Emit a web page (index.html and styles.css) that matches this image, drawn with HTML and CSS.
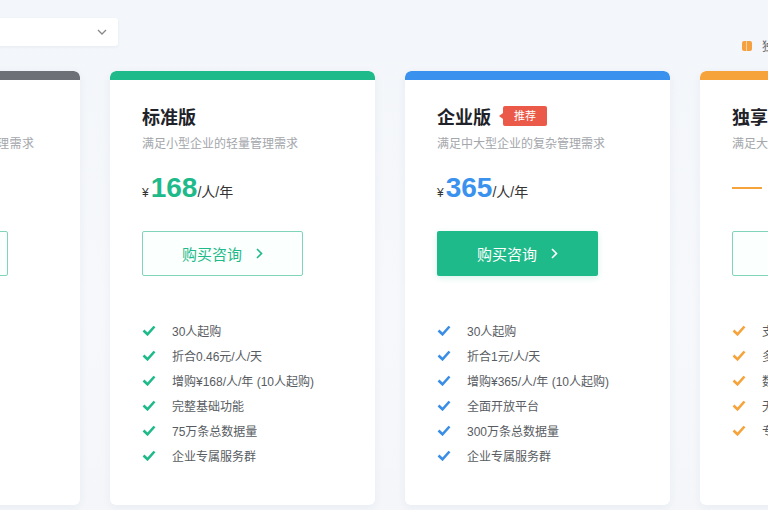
FILE: index.html
```html
<!DOCTYPE html>
<html lang="zh-CN">
<head>
    <meta charset="UTF-8">
    <meta name="viewport" content="width=device-width, initial-scale=1.0">
    <title>价格方案</title>
    <link rel="stylesheet" href="styles.css">
</head>
<body>
    <div id="page">
        <div class="toolbar">
            <div class="select">
                <svg class="select-arrow" width="10" height="6" viewBox="0 0 10 6"><path d="M1 1l4 4 4-4" fill="none" stroke="#888" stroke-width="1.3"/></svg>
            </div>
            <div class="legend"><i class="legend-dot"></i><span>独享</span></div>
        </div>

        <div class="plans">
            <!-- 基础版 -->
            <div class="plan plan-gray">
                <div class="plan-bar"></div>
                <div class="plan-body">
                    <h3 class="plan-title">基础版</h3>
                    <p class="plan-desc">满足个人及小团队的基础管理需求</p>
                    <div class="plan-price"><span class="num">免费</span></div>
                    <a class="btn btn-line">立即使用<svg class="chev" width="7" height="11" viewBox="0 0 7 11"><path d="M1 1l4.5 4.5L1 10" fill="none" stroke="currentColor" stroke-width="1.6"/></svg></a>
                </div>
            </div>

            <!-- 标准版 -->
            <div class="plan plan-green">
                <div class="plan-bar"></div>
                <div class="plan-body">
                    <h3 class="plan-title">标准版</h3>
                    <p class="plan-desc">满足小型企业的轻量管理需求</p>
                    <div class="plan-price"><span class="cur">¥</span><span class="num">168</span><span class="unit">/人/年</span></div>
                    <a class="btn btn-line">购买咨询<svg class="chev" width="7" height="11" viewBox="0 0 7 11"><path d="M1 1l4.5 4.5L1 10" fill="none" stroke="currentColor" stroke-width="1.6"/></svg></a>
                    <ul class="feats">
                        <li><svg class="ok" viewBox="0 0 14 11"><path d="M1.5 5.5l4 3.8L12.5 1.5" fill="none" stroke="currentColor" stroke-width="2.6"/></svg>30人起购</li>
                        <li><svg class="ok" viewBox="0 0 14 11"><path d="M1.5 5.5l4 3.8L12.5 1.5" fill="none" stroke="currentColor" stroke-width="2.6"/></svg>折合0.46元/人/天</li>
                        <li><svg class="ok" viewBox="0 0 14 11"><path d="M1.5 5.5l4 3.8L12.5 1.5" fill="none" stroke="currentColor" stroke-width="2.6"/></svg>增购¥168/人/年 (10人起购)</li>
                        <li><svg class="ok" viewBox="0 0 14 11"><path d="M1.5 5.5l4 3.8L12.5 1.5" fill="none" stroke="currentColor" stroke-width="2.6"/></svg>完整基础功能</li>
                        <li><svg class="ok" viewBox="0 0 14 11"><path d="M1.5 5.5l4 3.8L12.5 1.5" fill="none" stroke="currentColor" stroke-width="2.6"/></svg>75万条总数据量</li>
                        <li><svg class="ok" viewBox="0 0 14 11"><path d="M1.5 5.5l4 3.8L12.5 1.5" fill="none" stroke="currentColor" stroke-width="2.6"/></svg>企业专属服务群</li>
                    </ul>
                </div>
            </div>

            <!-- 企业版 -->
            <div class="plan plan-blue">
                <div class="plan-bar"></div>
                <div class="plan-body">
                    <h3 class="plan-title">企业版<span class="tag">推荐</span></h3>
                    <p class="plan-desc">满足中大型企业的复杂管理需求</p>
                    <div class="plan-price"><span class="cur">¥</span><span class="num">365</span><span class="unit">/人/年</span></div>
                    <a class="btn btn-fill">购买咨询<svg class="chev" width="7" height="11" viewBox="0 0 7 11"><path d="M1 1l4.5 4.5L1 10" fill="none" stroke="currentColor" stroke-width="1.6"/></svg></a>
                    <ul class="feats">
                        <li><svg class="ok" viewBox="0 0 14 11"><path d="M1.5 5.5l4 3.8L12.5 1.5" fill="none" stroke="currentColor" stroke-width="2.6"/></svg>30人起购</li>
                        <li><svg class="ok" viewBox="0 0 14 11"><path d="M1.5 5.5l4 3.8L12.5 1.5" fill="none" stroke="currentColor" stroke-width="2.6"/></svg>折合1元/人/天</li>
                        <li><svg class="ok" viewBox="0 0 14 11"><path d="M1.5 5.5l4 3.8L12.5 1.5" fill="none" stroke="currentColor" stroke-width="2.6"/></svg>增购¥365/人/年 (10人起购)</li>
                        <li><svg class="ok" viewBox="0 0 14 11"><path d="M1.5 5.5l4 3.8L12.5 1.5" fill="none" stroke="currentColor" stroke-width="2.6"/></svg>全面开放平台</li>
                        <li><svg class="ok" viewBox="0 0 14 11"><path d="M1.5 5.5l4 3.8L12.5 1.5" fill="none" stroke="currentColor" stroke-width="2.6"/></svg>300万条总数据量</li>
                        <li><svg class="ok" viewBox="0 0 14 11"><path d="M1.5 5.5l4 3.8L12.5 1.5" fill="none" stroke="currentColor" stroke-width="2.6"/></svg>企业专属服务群</li>
                    </ul>
                </div>
            </div>

            <!-- 独享版 -->
            <div class="plan plan-orange">
                <div class="plan-bar"></div>
                <div class="plan-body">
                    <h3 class="plan-title">独享版</h3>
                    <p class="plan-desc">满足大型企业的私有化需求</p>
                    <div class="plan-price"><span class="dash"></span></div>
                    <a class="btn btn-line">购买咨询<svg class="chev" width="7" height="11" viewBox="0 0 7 11"><path d="M1 1l4.5 4.5L1 10" fill="none" stroke="currentColor" stroke-width="1.6"/></svg></a>
                    <ul class="feats">
                        <li><svg class="ok" viewBox="0 0 14 11"><path d="M1.5 5.5l4 3.8L12.5 1.5" fill="none" stroke="currentColor" stroke-width="2.6"/></svg>支持私有部署</li>
                        <li><svg class="ok" viewBox="0 0 14 11"><path d="M1.5 5.5l4 3.8L12.5 1.5" fill="none" stroke="currentColor" stroke-width="2.6"/></svg>多环境隔离</li>
                        <li><svg class="ok" viewBox="0 0 14 11"><path d="M1.5 5.5l4 3.8L12.5 1.5" fill="none" stroke="currentColor" stroke-width="2.6"/></svg>数据独立存储</li>
                        <li><svg class="ok" viewBox="0 0 14 11"><path d="M1.5 5.5l4 3.8L12.5 1.5" fill="none" stroke="currentColor" stroke-width="2.6"/></svg>无限数据量</li>
                        <li><svg class="ok" viewBox="0 0 14 11"><path d="M1.5 5.5l4 3.8L12.5 1.5" fill="none" stroke="currentColor" stroke-width="2.6"/></svg>专属客户经理</li>
                    </ul>
                </div>
            </div>
        </div>
    </div>
</body>
</html>
```

FILE: styles.css
```css
*{
    margin: 0;
    padding: 0;
    list-style: none;
    box-sizing: border-box;
}
html, body{
    height: 100%;
    overflow: hidden;
}
body{
    background: linear-gradient(180deg, #f3f6fa 0%, #f6f8fb 60%, #f4f6f9 100%);
    font-family: "Liberation Sans", "Noto Sans CJK SC", sans-serif;
    color: #333;
}
#page{
    width: 768px;
    height: 510px;
    overflow: hidden;
}

/* 顶部工具条 */
.toolbar{
    display: flex;
    justify-content: space-between;
    align-items: flex-start;
    padding-top: 18px;
    height: 71px;
}
.select{
    display: flex;
    align-items: center;
    justify-content: flex-end;
    width: 160px;
    height: 28px;
    margin-left: -42px;
    padding: 0 11px 0 12px;
    background-color: #ffffff;
    border-radius: 3px;
    box-shadow: 0 1px 3px rgba(30, 50, 90, 0.06);
}
.legend{
    display: flex;
    align-items: center;
    gap: 10px;
    margin-top: 19px;
    margin-right: -18px;
    font-size: 12px;
    color: #666;
    white-space: nowrap;
}
.legend-dot{
    display: block;
    width: 10px;
    height: 10px;
    border-radius: 2px;
    background: linear-gradient(90deg, #f5a041 45%, #fbd49b 45%, #fbd49b 55%, #f5a041 55%);
}

/* 套餐卡片 */
.plans{
    display: flex;
    gap: 30px;
    margin-left: -185px;
}
.plan{
    flex: 0 0 265px;
    height: 434px;
    background-color: #ffffff;
    border-radius: 6px;
    box-shadow: 0 2px 10px rgba(40, 70, 120, 0.06);
    overflow: hidden;
}
.plan-bar{
    height: 9px;
    border-radius: 6px 6px 0 0;
}
.plan-gray .plan-bar{ background-color: #6d7077; }
.plan-green .plan-bar{ background-color: #1fba8a; }
.plan-blue .plan-bar{ background-color: #3a92ee; }
.plan-orange .plan-bar{ background-color: #f5a33a; }

.plan-body{
    padding: 24px 32px 0;
}
.plan-title{
    display: flex;
    align-items: center;
    height: 24px;
    font-size: 18px;
    font-weight: bold;
    color: #1f2329;
    white-space: nowrap;
}
.tag{
    position: relative;
    margin-left: 12px;
    height: 20px;
    line-height: 20px;
    padding: 0 11px;
    background-color: #eb5a48;
    border-radius: 2px;
    font-size: 11px;
    font-weight: normal;
    color: #ffffff;
}
.tag::before{
    content: "";
    position: absolute;
    left: -4px;
    top: 7px;
    border-right: 4px solid #eb5a48;
    border-top: 3px solid transparent;
    border-bottom: 3px solid transparent;
}
.plan-desc{
    margin-top: 7px;
    height: 18px;
    line-height: 18px;
    font-size: 12px;
    color: #a3a6ab;
    white-space: nowrap;
}
.plan-gray .plan-desc{
    letter-spacing: 0.5px;
}
.plan-price{
    display: flex;
    align-items: baseline;
    margin-top: 17px;
    height: 36px;
    line-height: 36px;
    white-space: nowrap;
}
.plan-price .cur{
    font-size: 12px;
    color: #333;
    margin-right: 2px;
}
.plan-price .num{
    font-size: 28px;
    font-weight: bold;
}
.plan-price .unit{
    font-size: 14px;
    color: #333;
}
.plan-gray .num{ color: #6d7077; font-size: 24px; }
.plan-green .num{ color: #1fba8a; }
.plan-blue .num{ color: #3a92ee; }
.plan-price .dash{
    display: block;
    align-self: center;
    width: 30px;
    height: 2px;
    background-color: #f5a33a;
}

.btn{
    display: flex;
    align-items: center;
    justify-content: center;
    gap: 14px;
    margin-top: 25px;
    width: 161px;
    height: 45px;
    border-radius: 2px;
    font-size: 15px;
    text-decoration: none;
}
.btn-line{
    border: 1px solid #7fd4ba;
    background-color: #fbfffd;
    color: #1fba8a;
}
.btn-fill{
    background-color: #1fba8a;
    color: #ffffff;
    box-shadow: 0 2px 6px rgba(31, 186, 138, 0.18);
}

.feats{
    margin-top: 42px;
}
.feats>li{
    display: flex;
    align-items: center;
    height: 25px;
    font-size: 12px;
    color: #585c62;
    white-space: nowrap;
}
.feats .ok{
    width: 14px;
    height: 11px;
    margin-right: 16px;
    flex: none;
}
.plan-green .ok{ color: #1fba8a; }
.plan-blue .ok{ color: #3a8ee6; }
.plan-orange .ok{ color: #f5a33a; }
```
